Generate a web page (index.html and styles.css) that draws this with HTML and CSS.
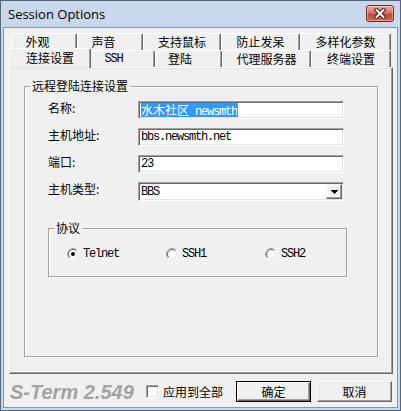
FILE: index.html
```html
<!DOCTYPE html>
<html lang="zh-CN">
<head>
<meta charset="utf-8">
<title>Session Options</title>
<link rel="stylesheet" href="styles.css">
</head>
<body>
<div class="window">
  <div class="titlebar">
    <span class="title">Session Options</span>
    <div class="close">
      <svg width="14" height="11" viewBox="0 0 14 11">
        <path d="M3.5 2 L10.5 9 M10.5 2 L3.5 9" stroke="#4a1510" stroke-width="4" stroke-linecap="square" fill="none"/>
        <path d="M3.5 2 L10.5 9 M10.5 2 L3.5 9" stroke="#ffffff" stroke-width="2" stroke-linecap="square" fill="none"/>
      </svg>
    </div>
  </div>
  <div class="client">
    <div class="tabrow back">
      <div class="tab b1">外观</div>
      <div class="tab b2">声音</div>
      <div class="tab b3">支持鼠标</div>
      <div class="tab b4">防止发呆</div>
      <div class="tab b5">多样化参数</div>
    </div>
    <div class="tabrow front">
      <div class="tab sel">连接设置</div>
      <div class="tab f2 mono">SSH</div>
      <div class="tab f3">登陆</div>
      <div class="tab f4">代理服务器</div>
      <div class="tab f5">终端设置</div>
    </div>
    <div class="page">
      <div class="group main">
        <span class="legend">远程登陆连接设置</span>
        <div class="form">
          <span class="label">名称:</span>
          <div class="edit"><span class="selected"><span class="cjk">水木社区</span> newsmth</span><span class="caret"></span></div>
          <span class="label">主机地址:</span>
          <div class="edit">bbs.newsmth.net</div>
          <span class="label">端口:</span>
          <div class="edit">23</div>
          <span class="label">主机类型:</span>
          <div class="combo">
            <span class="value">BBS</span>
            <span class="drop"><svg width="7" height="4" viewBox="0 0 7 4"><path d="M0 0h7v1h-1v1h-1v1h-1v1h-1v-1h-1v-1h-1v-1h-1z" fill="#000"/></svg></span>
          </div>
        </div>
        <div class="group proto">
          <span class="legend">协议</span>
          <div class="radios">
            <div class="radio">
              <svg width="12" height="12" viewBox="0 0 12 12">
                <circle cx="6" cy="6" r="4.5" fill="#fff"/>
                <path d="M2.11 9.89 A5.5 5.5 0 0 1 9.89 2.11" stroke="#a0a0a0" fill="none"/>
                <path d="M9.89 2.11 A5.5 5.5 0 0 1 2.11 9.89" stroke="#ffffff" fill="none"/>
                <path d="M2.82 9.18 A4.5 4.5 0 0 1 9.18 2.82" stroke="#696969" fill="none"/>
                <path d="M9.18 2.82 A4.5 4.5 0 0 1 2.82 9.18" stroke="#e3e3e3" fill="none"/>
                <circle cx="6" cy="6" r="2" fill="#000"/>
              </svg>
              <span>Telnet</span>
            </div>
            <div class="radio">
              <svg width="12" height="12" viewBox="0 0 12 12">
                <circle cx="6" cy="6" r="4.5" fill="#fff"/>
                <path d="M2.11 9.89 A5.5 5.5 0 0 1 9.89 2.11" stroke="#a0a0a0" fill="none"/>
                <path d="M9.89 2.11 A5.5 5.5 0 0 1 2.11 9.89" stroke="#ffffff" fill="none"/>
                <path d="M2.82 9.18 A4.5 4.5 0 0 1 9.18 2.82" stroke="#696969" fill="none"/>
                <path d="M9.18 2.82 A4.5 4.5 0 0 1 2.82 9.18" stroke="#e3e3e3" fill="none"/>
              </svg>
              <span>SSH1</span>
            </div>
            <div class="radio">
              <svg width="12" height="12" viewBox="0 0 12 12">
                <circle cx="6" cy="6" r="4.5" fill="#fff"/>
                <path d="M2.11 9.89 A5.5 5.5 0 0 1 9.89 2.11" stroke="#a0a0a0" fill="none"/>
                <path d="M9.89 2.11 A5.5 5.5 0 0 1 2.11 9.89" stroke="#ffffff" fill="none"/>
                <path d="M2.82 9.18 A4.5 4.5 0 0 1 9.18 2.82" stroke="#696969" fill="none"/>
                <path d="M9.18 2.82 A4.5 4.5 0 0 1 2.82 9.18" stroke="#e3e3e3" fill="none"/>
              </svg>
              <span>SSH2</span>
            </div>
          </div>
        </div>
      </div>
    </div>
    <div class="footer">
      <span class="brand">S-Term 2.549</span>
      <span class="check"></span>
      <span class="check-label">应用到全部</span>
      <div class="buttons">
        <div class="btn default">确定</div>
        <div class="btn">取消</div>
      </div>
    </div>
  </div>
</div>
</body>
</html>
```

FILE: styles.css
```css
* { box-sizing: border-box; }
html, body { margin: 0; padding: 0; }
body {
  width: 401px;
  height: 411px;
  overflow: hidden;
  font-family: "Noto Sans CJK SC", sans-serif;
  font-size: 12px;
  color: #000;
  background: #fff;
}
.window {
  width: 401px;
  height: 411px;
  border: 1px solid #55677f;
  background: #c9d8eb;
  padding: 0 2px 2px;
  display: flex;
  flex-direction: column;
}
.titlebar {
  height: 26px;
  display: flex;
  align-items: flex-start;
  flex: none;
}
.title {
  font-family: "Open Sans", sans-serif;
  font-size: 13px;
  line-height: 18px;
  margin: 4px 0 0 5px;
  color: #000;
}
.close {
  margin: 4px 4px 0 auto;
  width: 28px;
  height: 17px;
  border: 1px solid #6e2a22;
  border-radius: 3px;
  background: linear-gradient(#e9aba1, #d9786b 45%, #c54534 55%, #d5705f);
  box-shadow: inset 0 0 0 1px rgba(255, 255, 255, 0.35);
  display: flex;
  align-items: center;
  justify-content: center;
}
.close svg { display: block; }
.client {
  flex: 1;
  border: 1px solid #8497b0;
  background: #f0f0f0;
  display: flex;
  flex-direction: column;
}
.tabrow {
  display: flex;
  height: 17px;
  padding-left: 7px;
  align-items: flex-start;
  flex: none;
}
.tabrow.back { margin-top: 5px; }
.tab {
  height: 17px;
  flex: none;
  border-top: 1px solid #fff;
  border-left: 1px solid #fff;
  border-right: 1px solid #696969;
  box-shadow: inset -1px 0 #a0a0a0;
  border-radius: 2px 2px 0 0;
  background: #f0f0f0;
  display: flex;
  align-items: center;
  justify-content: center;
  line-height: 14px;
  white-space: nowrap;
}
.mono, .edit, .combo .value, .radio span {
  font-family: "Liberation Mono", monospace;
  font-size: 12px;
  letter-spacing: -1.2px;
}
.b1 { width: 66px; padding-right: 13px; }
.b2 { width: 66px; padding-right: 13px; }
.b3 { width: 78px; }
.b4 { width: 79px; }
.b5 { width: 91px; }
.sel {
  width: 82px;
  height: 20px;
  margin: -2px -2px 0;
  padding-bottom: 2px;
  position: relative;
  z-index: 1;
}
.f2 { width: 66px; padding-right: 17px; }
.f3 { width: 67px; padding-right: 17px; }
.f4 { width: 89px; }
.f5 { width: 80px; }
.page {
  margin-left: 5px;
  width: 384px;
  height: 307px;
  flex: none;
  border: 1px solid;
  border-color: #fff #696969 #696969 #fff;
  box-shadow: inset -1px -1px #a0a0a0, inset 1px 1px #e3e3e3;
  padding: 18px 0 0 14px;
}
.group {
  position: relative;
  border: 1px solid #a0a0a0;
  box-shadow: inset 1px 1px #fff, 1px 1px #fff;
}
.legend {
  position: absolute;
  top: -8px;
  left: 5px;
  padding: 0 2px;
  background: #f0f0f0;
  line-height: 14px;
  white-space: nowrap;
}
.main {
  width: 354px;
  height: 271px;
  padding: 14px 0 0 23px;
}
.form {
  display: grid;
  grid-template-columns: 90px 206px;
  grid-template-rows: 18px 18px 18px 19px;
  row-gap: 9px;
}
.label {
  line-height: 14px;
  white-space: nowrap;
}
.edit, .combo {
  border: 1px solid;
  border-color: #a0a0a0 #fff #fff #a0a0a0;
  box-shadow: inset 1px 1px #696969, inset -1px -1px #e3e3e3;
  background: #fff;
  white-space: nowrap;
  overflow: hidden;
}
.edit {
  height: 18px;
  padding: 1px 0 0 2px;
  line-height: 14px;
  display: flex;
}
.selected {
  background: #3399ff;
  color: #fff;
  height: 14px;
  display: inline-block;
}
.cjk {
  font-family: "Noto Sans CJK SC", sans-serif;
  font-size: 12px;
  letter-spacing: 0;
}
.caret {
  width: 1px;
  height: 14px;
  background: #e07a20;
}
.combo {
  height: 19px;
  padding: 1px;
  display: flex;
  align-items: center;
}
.combo .value {
  padding-left: 1px;
  line-height: 14px;
}
.drop {
  margin-left: auto;
  width: 16px;
  height: 15px;
  border: 1px solid;
  border-color: #f0f0f0 #696969 #696969 #f0f0f0;
  box-shadow: inset -1px -1px #a0a0a0, inset 1px 1px #fff;
  background: #f0f0f0;
  display: flex;
  align-items: center;
  justify-content: center;
}
.drop svg { display: block; }
.proto {
  margin-top: 27px;
  width: 299px;
  height: 49px;
}
.radios {
  display: flex;
  padding-left: 18px;
  margin-top: 18px;
}
.radio {
  flex: none;
  width: 99px;
  height: 14px;
  display: flex;
  align-items: center;
  gap: 4px;
  line-height: 14px;
}
.radio svg { display: block; flex: none; }
.footer {
  flex: 1;
  display: flex;
  align-items: center;
  padding: 2px 5px 0 6px;
}
.brand {
  width: 136px;
  flex: none;
  font-family: "Liberation Sans", sans-serif;
  font-style: italic;
  font-weight: bold;
  font-size: 20px;
  line-height: 24px;
  color: #a3a3a3;
  white-space: nowrap;
}
.check {
  flex: none;
  width: 13px;
  height: 13px;
  border: 1px solid;
  border-color: #a0a0a0 #fff #fff #a0a0a0;
  box-shadow: inset 1px 1px #696969, inset -1px -1px #e3e3e3;
  background: #fff;
}
.check-label {
  margin-left: 4px;
  line-height: 14px;
}
.buttons {
  margin-left: auto;
  display: flex;
  gap: 6px;
}
.btn {
  width: 75px;
  height: 21px;
  border: 1px solid;
  border-color: #fff #696969 #696969 #fff;
  box-shadow: inset -1px -1px #a0a0a0, inset 1px 1px #e3e3e3;
  background: #f0f0f0;
  display: flex;
  align-items: center;
  justify-content: center;
  line-height: 14px;
}
.btn.default {
  border: 1px solid #000;
  box-shadow: inset 1px 1px #fff, inset -1px -1px #696969, inset -2px -2px #a0a0a0;
}
```
